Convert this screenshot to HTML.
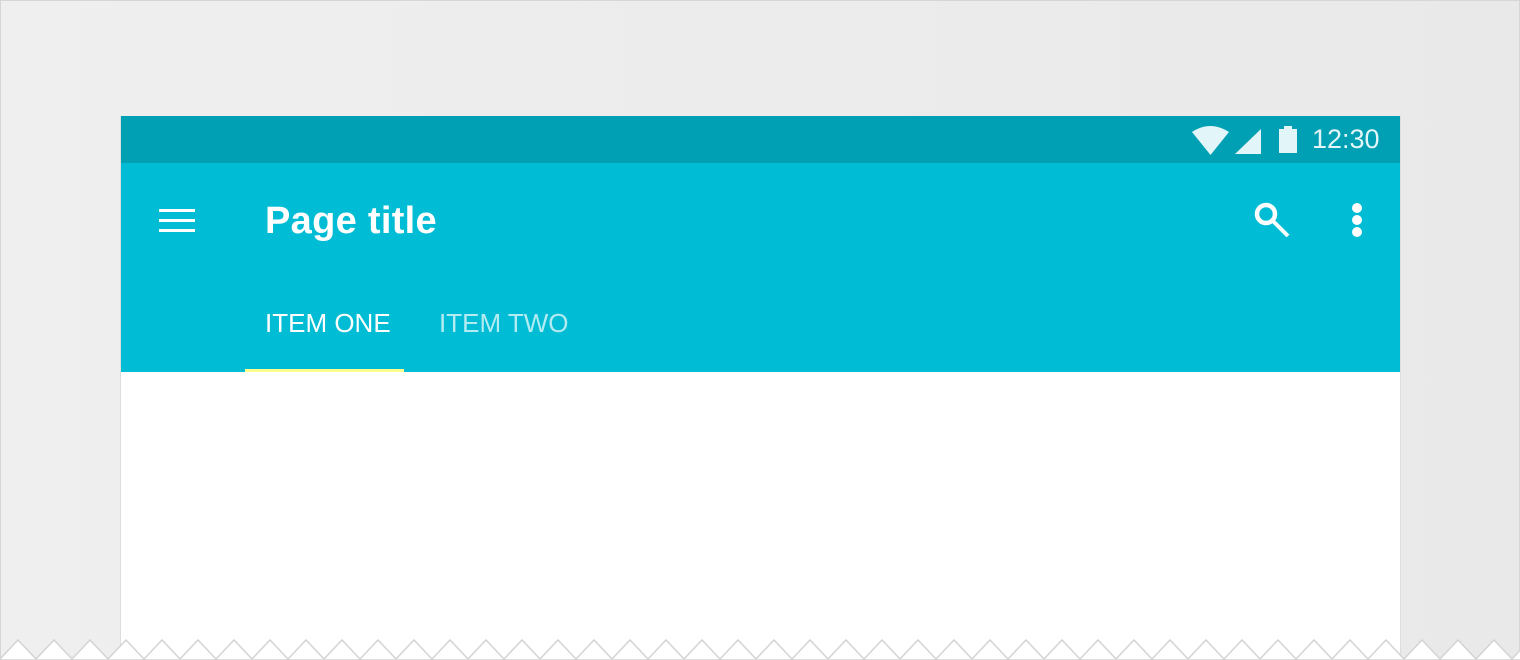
<!DOCTYPE html>
<html><head><style>
html,body{margin:0;padding:0;width:1520px;height:660px;overflow:hidden;font-family:"Liberation Sans",Roboto,sans-serif;}
.bg{position:absolute;left:0;top:0;width:1518px;height:658px;border:1px solid #d6d6d6;background:linear-gradient(90deg,#efefef,#e9e9e9);}
.frame{position:absolute;left:120px;top:116px;width:1279px;height:544px;background:#fff;border-left:1px solid #ddd;border-right:1px solid #ddd;}
.status{position:absolute;left:0;top:0;width:1279px;height:47px;background:#00a0b4;}
.app{position:absolute;left:0;top:47px;width:1279px;height:209px;background:#00bcd4;}
.t{position:absolute;color:#fff;}
</style></head><body>
<div class="bg"></div>
<div class="frame">
 <div class="status">
  <svg style="position:absolute;left:1071px;top:10px" width="40" height="30" viewBox="0 0 40 30"><path d="M0 6 Q18 -6 37 6 L18.5 29 Z" fill="#e2f5f8"/></svg>
  <svg style="position:absolute;left:1112px;top:10px" width="30" height="30"><path d="M28 3 L28 28 L2 28 Z" fill="#e2f5f8"/></svg>
  <div style="position:absolute;left:1158px;top:13px;width:18px;height:24px;background:#e2f5f8"></div>
  <div style="position:absolute;left:1163px;top:10px;width:8px;height:4px;background:#e2f5f8"></div>
  <div class="t" style="left:1191px;top:8px;font-size:27px;color:#e2f5f8">12:30</div>
 </div>
 <div class="app">
  <div style="position:absolute;left:38px;top:46px;width:36px;height:3px;background:#fff;box-shadow:0 10px 0 #fff,0 20px 0 #fff"></div>
  <div class="t" style="left:144px;top:37px;font-size:38px;font-weight:bold;letter-spacing:0.3px">Page title</div>
  <svg style="position:absolute;left:1132px;top:38px" width="40" height="40"><circle cx="13" cy="13" r="9" stroke="#fff" stroke-width="4.5" fill="none"/><path d="M19 19 L35 35" stroke="#fff" stroke-width="4"/></svg>
  <div style="position:absolute;left:1231px;top:40px;width:10px;height:10px;border-radius:50%;background:#fff;box-shadow:0 12px 0 #fff,0 24px 0 #fff"></div>
  <div class="t" style="left:144px;top:145px;font-size:26px">ITEM ONE</div>
  <div class="t" style="left:318px;top:145px;font-size:26px;color:#b2ebf2">ITEM TWO</div>
  <div style="position:absolute;left:124px;top:206px;width:159px;height:3px;background:#ffff8d"></div>
 </div>
</div>
<svg style="position:absolute;left:0;top:638px" width="1520" height="22">
<path d="M0 21 L18 2 L36 21 L54 2 L72 21 L90 2 L108 21 L126 2 L144 21 L162 2 L180 21 L198 2 L216 21 L234 2 L252 21 L270 2 L288 21 L306 2 L324 21 L342 2 L360 21 L378 2 L396 21 L414 2 L432 21 L450 2 L468 21 L486 2 L504 21 L522 2 L540 21 L558 2 L576 21 L594 2 L612 21 L630 2 L648 21 L666 2 L684 21 L702 2 L720 21 L738 2 L756 21 L774 2 L792 21 L810 2 L828 21 L846 2 L864 21 L882 2 L900 21 L918 2 L936 21 L954 2 L972 21 L990 2 L1008 21 L1026 2 L1044 21 L1062 2 L1080 21 L1098 2 L1116 21 L1134 2 L1152 21 L1170 2 L1188 21 L1206 2 L1224 21 L1242 2 L1260 21 L1278 2 L1296 21 L1314 2 L1332 21 L1350 2 L1368 21 L1386 2 L1404 21 L1422 2 L1440 21 L1458 2 L1476 21 L1494 2 L1512 21 L1530 2 L1530 22 L0 22 Z" fill="#fff" stroke="#d4d4d4" stroke-width="1.5"/>
</svg>
</body></html>
